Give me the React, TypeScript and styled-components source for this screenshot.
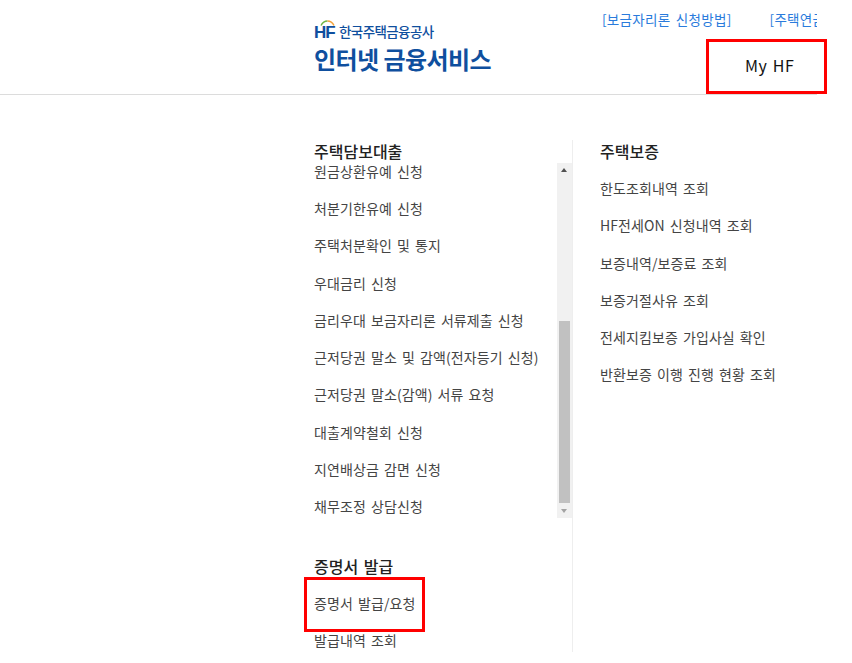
import styled, { createGlobalStyle } from 'styled-components';

const FONT = '"Noto Sans CJK KR", "Noto Sans", sans-serif';

const loanItems = [
  '원금상환유예 신청',
  '처분기한유예 신청',
  '주택처분확인 및 통지',
  '우대금리 신청',
  '금리우대 보금자리론 서류제출 신청',
  '근저당권 말소 및 감액(전자등기 신청)',
  '근저당권 말소(감액) 서류 요청',
  '대출계약철회 신청',
  '지연배상금 감면 신청',
  '채무조정 상담신청',
];

const guaranteeItems = [
  '한도조회내역 조회',
  'HF전세ON 신청내역 조회',
  '보증내역/보증료 조회',
  '보증거절사유 조회',
  '전세지킴보증 가입사실 확인',
  '반환보증 이행 진행 현황 조회',
];

function HfMark() {
  return (
    <MarkArc width="15" height="6" viewBox="0 0 15 6" aria-hidden="true">
      <path d="M1 5.5C2.5 2.5 5 1 7.5 1" stroke="#6fb544" strokeWidth="1.5" fill="none" />
      <path d="M7.5 1c2.5 0 5 1.5 6.5 4.5" stroke="#f2a23a" strokeWidth="1.5" fill="none" />
    </MarkArc>
  );
}

export default function App() {
  return (
    <Page>
      <GlobalStyle />
      <Header>
        <Logo>
          <LogoTop>
            <LogoMark>
              <HfMark />
              HF
            </LogoMark>
            <LogoOrg>한국주택금융공사</LogoOrg>
          </LogoTop>
          <LogoTitle>인터넷 금융서비스</LogoTitle>
        </Logo>
        <HeaderRight>
          <TopLinks>
            <TopLink>[보금자리론 신청방법]</TopLink>
            <TopLink>[주택연금 신청방법]</TopLink>
          </TopLinks>
          <MyHf>My HF</MyHf>
        </HeaderRight>
      </Header>
      <RedBox $variant="myhf" />
      <Menu>
        <LeftColumn>
          <SectionTitle>주택담보대출</SectionTitle>
          <ScrollArea>
            <ScrollList>
              {loanItems.map((item) => (
                <MenuItem key={item}>{item}</MenuItem>
              ))}
            </ScrollList>
            <ScrollBar>
              <ScrollArrow $dir="up" />
              <ScrollTrack>
                <ScrollThumb />
              </ScrollTrack>
              <ScrollArrow $dir="down" />
            </ScrollBar>
          </ScrollArea>
          <SecondTitle>증명서 발급</SecondTitle>
          <ItemGroup>
            <MenuItem>증명서 발급/요청</MenuItem>
            <MenuItem>발급내역 조회</MenuItem>
          </ItemGroup>
          <RedBox $variant="cert" />
        </LeftColumn>
        <RightColumn>
          <SectionTitle>주택보증</SectionTitle>
          <ItemGroup>
            {guaranteeItems.map((item) => (
              <MenuItem key={item}>{item}</MenuItem>
            ))}
          </ItemGroup>
        </RightColumn>
      </Menu>
    </Page>
  );
}

const GlobalStyle = createGlobalStyle`
  html, body {
    margin: 0;
    padding: 0;
    background: #fff;
    overflow: hidden;
  }
  body {
    font-family: ${FONT};
  }
`;

const Page = styled.div`
  position: relative;
  width: 852px;
  height: 663px;
  background: #fff;
  overflow: hidden;
`;

const Header = styled.header`
  display: flex;
  width: 817px;
  height: 95px;
  box-sizing: border-box;
  padding-left: 314px;
  border-bottom: 1px solid #dcdcdc;
  overflow: hidden;
`;

const Logo = styled.div`
  display: flex;
  flex-direction: column;
  width: 288px;
  flex: none;
  padding-top: 22px;
  box-sizing: border-box;
  color: #0f4f9e;
`;

const LogoTop = styled.div`
  display: flex;
  align-items: flex-end;
  height: 19px;
  gap: 4px;
`;

const LogoMark = styled.span`
  position: relative;
  width: 21px;
  font-family: 'Liberation Sans', sans-serif;
  font-weight: 700;
  font-size: 17px;
  line-height: 17px;
  letter-spacing: -1px;
`;

const MarkArc = styled.svg`
  position: absolute;
  left: 6px;
  top: -4px;
`;

const LogoOrg = styled.span`
  font-size: 13.5px;
  line-height: 19px;
  font-weight: 500;
  letter-spacing: -0.6px;
`;

const LogoTitle = styled.div`
  font-size: 24px;
  line-height: 36px;
  font-weight: 700;
  letter-spacing: -0.55px;
  white-space: nowrap;
`;

const HeaderRight = styled.div`
  display: flex;
  flex-direction: column;
  flex: none;
  width: 250px;
`;

const TopLinks = styled.div`
  display: flex;
  gap: 38px;
  padding-top: 9px;
  white-space: nowrap;
`;

const TopLink = styled.a`
  font-size: 13.5px;
  line-height: 20px;
  color: #2a7bdc;
  letter-spacing: 0.3px;
  word-spacing: 2px;
`;

const MyHf = styled.div`
  margin: 26px 0 0 143px;
  font-size: 16px;
  line-height: 20px;
  font-weight: 400;
  color: #111;
  letter-spacing: 0.6px;
  word-spacing: 1px;
  white-space: nowrap;
`;

const RedBox = styled.div<{ $variant: 'myhf' | 'cert' }>`
  position: absolute;
  box-sizing: border-box;
  border: 3px solid #ff0000;
  pointer-events: none;
  ${({ $variant }) =>
    $variant === 'myhf'
      ? 'left: 706px; top: 39px; width: 121px; height: 55px;'
      : 'left: -10px; top: 437px; width: 121px; height: 55px;'}
`;

const Menu = styled.div`
  display: flex;
  width: 817px;
  height: 557px;
  box-sizing: border-box;
  padding: 45px 0 0 314px;
`;

const LeftColumn = styled.div`
  position: relative;
  flex: none;
  width: 259px;
  height: 512px;
  box-sizing: border-box;
  border-right: 1px solid #eeeeee;
`;

const RightColumn = styled.div`
  flex: none;
  padding-left: 27px;
  white-space: nowrap;
`;

const SectionTitle = styled.h3`
  margin: 0;
  height: 23px;
  font-size: 16px;
  line-height: 23px;
  font-weight: 500;
  color: #222;
  word-spacing: 2px;
`;

const SecondTitle = styled(SectionTitle)`
  margin-top: 37px;
`;

const ScrollArea = styled.div`
  display: flex;
  height: 355px;
`;

const ScrollList = styled.ul`
  flex: 1;
  margin: 0;
  padding: 0;
  list-style: none;
  overflow: hidden;
  & > :first-child {
    margin-top: -10.3px;
  }
`;

const ItemGroup = styled.ul`
  margin: 0;
  padding: 7px 0 0;
  list-style: none;
`;

const MenuItem = styled.li`
  display: block;
  height: 37.3px;
  font-size: 14px;
  line-height: 37px;
  color: #444;
  letter-spacing: 0.1px;
  word-spacing: 1.8px;
  white-space: nowrap;
`;

const ScrollBar = styled.div`
  display: flex;
  flex-direction: column;
  flex: none;
  width: 15px;
  background: #f1f1f1;
`;

const ScrollArrow = styled.span<{ $dir: 'up' | 'down' }>`
  flex: none;
  width: 0;
  height: 0;
  margin: ${({ $dir }) => ($dir === 'up' ? '5px 4px 6px' : '6px 4px 5px')};
  border-left: 3.5px solid transparent;
  border-right: 3.5px solid transparent;
  ${({ $dir }) =>
    $dir === 'up' ? 'border-bottom: 4px solid #505050;' : 'border-top: 4px solid #a3a3a3;'}
`;

const ScrollTrack = styled.div`
  flex: 1;
  padding: 143px 2px 0;
`;

const ScrollThumb = styled.div`
  height: 182px;
  background: #c1c1c1;
`;
